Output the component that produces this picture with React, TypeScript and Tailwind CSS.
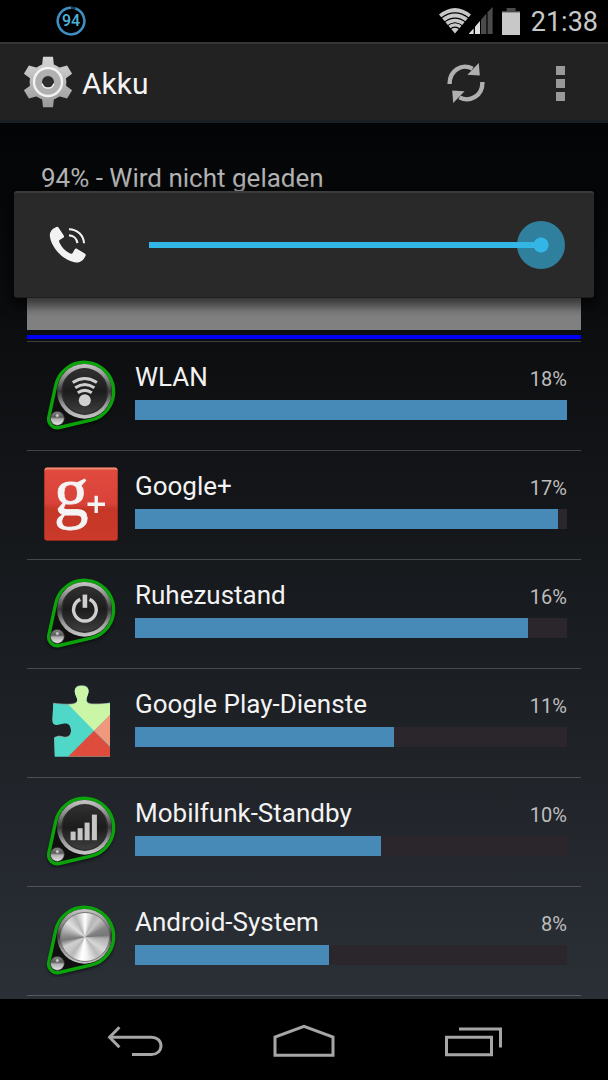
import { useId, useState } from "react";
import type { ReactNode } from "react";

const DROP_PATH =
  "M11.7 27.5A29.3 29.3 0 1 1 46.8 62.2L15.2 69.5A8.7 8.7 0 0 1 4.8 59.2Z";

/** Metal knob in a green drop outline; children are drawn on its face. */
function KnobIcon({ brushed = false, children }: { brushed?: boolean; children?: ReactNode }) {
  const id = useId();
  return (
    <svg viewBox="0 0 74 74" className="size-[74px] shrink-0" aria-hidden="true">
      <defs>
        <linearGradient id={`${id}ring`} x1="0" y1="0" x2="0" y2="1">
          <stop offset="0" stopColor="#c8c8c8" />
          <stop offset="0.25" stopColor="#8c8c8c" />
          <stop offset="0.5" stopColor="#3a3a3a" />
          <stop offset="0.75" stopColor="#9a9a9a" />
          <stop offset="1" stopColor="#c8c8c8" />
        </linearGradient>
        <linearGradient id={`${id}face`} x1="0" y1="0" x2="0" y2="1">
          <stop offset="0" stopColor="#303030" />
          <stop offset="0.5" stopColor="#1c1c1c" />
          <stop offset="1" stopColor="#3e3e3e" />
        </linearGradient>
        <linearGradient id={`${id}ball`} x1="0" y1="0" x2="0" y2="1">
          <stop offset="0" stopColor="#8a8a8a" />
          <stop offset="0.4" stopColor="#5a5a5a" />
          <stop offset="0.55" stopColor="#b0b0b0" />
          <stop offset="1" stopColor="#e6e6e6" />
        </linearGradient>
        <filter id={`${id}soft`} x="-20%" y="-20%" width="140%" height="140%">
          <feGaussianBlur stdDeviation="1.6" />
        </filter>
      </defs>
      <path d={DROP_PATH} transform="translate(0 2)" fill="#000" stroke="#000" strokeWidth="3" opacity="0.5" filter={`url(#${id}soft)`} />
      <path d={DROP_PATH} fill="#101010" stroke="#0aa30a" strokeWidth="3.4" />
      <circle cx="40.5" cy="33.3" r="27.4" fill={`url(#${id}ring)`} />
      {brushed ? (
        <foreignObject x="15.5" y="8.5" width="50" height="50">
          <div className="size-[50px] rounded-full border border-[#777] bg-[conic-gradient(#fff_0deg,#b5b5b5_25deg,#c4c4c4_40deg,#858585_65deg,#777_85deg,#b0b0b0_95deg,#d8d8d8_125deg,#b9b9b9_145deg,#f4f4f4_175deg,#fff_190deg,#b8b8b8_215deg,#c9c9c9_230deg,#cfcfcf_245deg,#777_262deg,#909090_275deg,#e0e0e0_310deg,#b5b5b5_335deg,#fff_360deg)]" />
        </foreignObject>
      ) : (
        <>
          <circle cx="40.7" cy="33.5" r="23.4" fill="#2c2c2c" />
          <circle cx="40.7" cy="33.5" r="22" fill={`url(#${id}face)`} />
        </>
      )}
      <circle cx="13.3" cy="60.4" r="7" fill={`url(#${id}ball)`} stroke="#333" strokeWidth="0.6" />
      <circle cx="13.3" cy="57.4" r="1.5" fill="#eee" opacity="0.7" />
      {children}
    </svg>
  );
}

function WifiKnob() {
  return (
    <KnobIcon>
      <g fill="none" stroke="#cfcfcf" strokeWidth="3" strokeLinecap="butt">
        <path d="M28.7 24.6Q40.8 16.6 52.9 24.6" />
        <path d="M31.2 29.8Q40.8 23.2 50.4 29.8" />
        <path d="M33.8 34.8Q40.8 30 47.8 34.8" />
      </g>
      <circle cx="40.8" cy="42.3" r="6" fill="#cfcfcf" />
    </KnobIcon>
  );
}

function PowerKnob() {
  return (
    <KnobIcon>
      <path d="M36.3 23.4A11.3 11.3 0 1 0 45.5 23.4" fill="none" stroke="#cfcfcf" strokeWidth="3.4" />
      <path d="M40.9 18.6V31.8" stroke="#cfcfcf" strokeWidth="4.6" strokeLinecap="butt" />
    </KnobIcon>
  );
}

function SignalKnob() {
  return (
    <KnobIcon>
      <g fill="#c6c6c6">
        <rect x="26.6" y="37.6" width="5" height="8.6" />
        <rect x="33.6" y="34.2" width="5" height="12" />
        <rect x="40.6" y="28.6" width="5" height="17.6" />
        <rect x="47.9" y="20.6" width="5" height="25.6" />
      </g>
    </KnobIcon>
  );
}

function GooglePlusIcon() {
  const id = useId();
  return (
    <svg viewBox="0 0 74 74" className="size-[74px] shrink-0 overflow-visible" aria-hidden="true">
      <defs>
        <linearGradient id={id} x1="0" y1="0" x2="0" y2="1">
          <stop offset="0" stopColor="#e04a3f" />
          <stop offset="0.48" stopColor="#d84238" />
          <stop offset="0.56" stopColor="#c53727" />
          <stop offset="1" stopColor="#cb3a2a" />
        </linearGradient>
      </defs>
      <rect x="0" y="0.5" width="74" height="73.5" rx="3.5" fill="#7d2018" />
      <rect x="0.5" y="0.5" width="73" height="5" rx="2.5" fill="#f08a70" />
      <rect x="0.5" y="2.6" width="73" height="70.6" rx="2.5" fill={`url(#${id})`} />
      <text x="10" y="48" fontFamily="Liberation Serif, serif" fontSize="69" fill="#f4f4f4" stroke="#f4f4f4" strokeWidth="0.8">
        g
      </text>
      <path d="M43.5 37.3H61M52.2 28.8V46" stroke="#f4f4f4" strokeWidth="3.4" />
    </svg>
  );
}

function PlayServicesIcon() {
  const id = useId();
  const outline =
    "M9.3 18.6C17 19.6 24 20 28.5 19.3C32.6 18.6 34 16.8 33 13.4C31.8 10 30.6 9 30.8 5.6C31.2 2.2 34 1 37.6 1C41.4 1 44.2 2.4 44.5 5.8C44.7 9 43.4 10.2 42.6 13.4C41.8 17 43.4 18.8 47.5 19.2C53 19.6 59 19.2 66 18.3V71.7H10.8L10.2 53C14 51.4 16.4 51.2 19.4 52.2C24 53.4 27 50.6 27 46C27 40.6 24.4 38 20 38.6C16.4 39.2 14.2 40.4 11 39.8C8.6 39 8.4 37 8.5 34Z";
  return (
    <svg viewBox="0 0 74 74" className="size-[74px] shrink-0" aria-hidden="true">
      <defs>
        <clipPath id={id}>
          <path d={outline} />
        </clipPath>
      </defs>
      <path d={outline} transform="translate(0 -0.8)" fill="#8f9a92" />
      <g clipPath={`url(#${id})`}>
        <rect width="74" height="74" fill="#4fd8c8" />
        <path d="M8 2.7L50 45.7L74 22V0H8Z" fill="#cbf6a8" />
        <path d="M50 45.7L24 71.8H76Z" fill="#dd4c3d" />
        <path d="M50 45.7L66 29.7V61Z" fill="#f0987e" />
      </g>
    </svg>
  );
}

function GearIcon() {
  const id = useId();
  return (
    <svg viewBox="-25 -26 50 52" className="h-[52px] w-[50px] shrink-0" aria-hidden="true">
      <defs>
        <linearGradient id={id} gradientUnits="userSpaceOnUse" x1="0" y1="-25" x2="0" y2="25">
          <stop offset="0" stopColor="#d6d6d6" />
          <stop offset="1" stopColor="#9b9b9b" />
        </linearGradient>
      </defs>
      <g fill={`url(#${id})`}>
        <circle r="18.4" />
        <path d="M-5 -25.2H5L6 -16H-6Z" />
        <path d="M-5 25.2H5L6 16H-6Z" />
        <path d="M19.1 -16.6L24.1 -8.2L17 -3L10 -14Z" />
        <path d="M-19.1 -16.6L-24.1 -8.2L-17 -3L-10 -14Z" />
        <path d="M19.1 16.6L24.1 8.2L17 3L10 14Z" />
        <path d="M-19.1 16.6L-24.1 8.2L-17 3L-10 14Z" />
      </g>
      <circle r="14" fill="#b0b0b0" stroke="#f2f2f2" strokeWidth="2.4" />
      <circle r="6" fill="#2c2c2c" />
      <path d="M-5.8 1.6A6 6 0 0 0 5.8 1.6" fill="none" stroke="#f5f5f5" strokeWidth="1.4" />
    </svg>
  );
}

function StatusWifi() {
  return (
    <svg viewBox="0 0 32 26" className="h-[26px] w-8" aria-hidden="true">
      <path d="M0 6.6Q16 -6.4 32 6.6L16 25.4Z" fill="#c8c8c8" />
      <g fill="none" stroke="#000" strokeWidth="1.1">
        <path d="M2 10.2Q16 -0.4 30 10.2" />
        <path d="M5 14.4Q16 5.8 27 14.4" />
        <path d="M8 18.2Q16 11.4 24 18.2" />
        <path d="M11 21.4Q16 16.8 21 21.4" />
      </g>
    </svg>
  );
}

function StatusSignal() {
  return (
    <svg viewBox="0 0 24 28" className="h-7 w-6" aria-hidden="true">
      <path d="M0 27V26.4L4.6 21.4V27Z" fill="#e0e0e0" />
      <path d="M6 27V19.8L11 14V27Z" fill="#e0e0e0" />
      <path d="M12 27V12.8L17.4 6.6V27Z" fill="#4b4b4b" />
      <path d="M18.6 27V5.2L23.6 0V27Z" fill="#4b4b4b" />
    </svg>
  );
}

function RefreshIcon() {
  return (
    <svg viewBox="0 0 38 40" className="h-10 w-[38px]" aria-hidden="true">
      <g fill="none" stroke="#b0b0b0" strokeWidth="4.4">
        <path d="M2.6 21C2.4 7 15 0.2 25.6 5.6" />
        <path d="M35.4 19C35.6 33 23 39.8 12.4 34.4" />
      </g>
      <path d="M31.8 0L32.8 12.4L20.4 11.8Z" fill="#b0b0b0" />
      <path d="M6.2 40L5.2 27.6L17.6 28.2Z" fill="#b0b0b0" />
    </svg>
  );
}

function CallVolumeIcon() {
  return (
    <svg viewBox="0 0 38 38" className="size-[38px] shrink-0" aria-hidden="true">
      <path
        d="M6.4 1.4C7.8 0.6 9 0.6 9.8 1.9L14.6 9.2C15.4 10.5 15 11.4 13.8 12.1L10.6 14C10 14.6 10 15.2 10.4 16.4C12.4 21 16.4 25.2 21.2 27.4C22.4 27.9 23.2 27.8 23.8 26.8L25.6 23.6C26.2 22.5 27.2 22.2 28.2 22.9L35.8 27.6C37 28.4 37 29.2 36.2 30.6C34.4 34.2 31.4 36.8 27.6 36.6C14.4 35.2 1.8 21.4 0.8 9.6C0.6 5.8 3 3 6.4 1.4Z"
        fill="#f2f2f2"
      />
      <g fill="none" stroke="#f2f2f2" strokeWidth="2.1">
        <path d="M20 9.4C24.6 9.6 28 12.6 28.4 17.2" />
        <path d="M20 3.2C28.4 3.4 34.6 9.2 35 17.2" />
      </g>
    </svg>
  );
}

type Consumer = { name: string; percent: number; fill: number; icon: ReactNode };

const consumers: Consumer[] = [
  { name: "WLAN", percent: 18, fill: 100, icon: <WifiKnob /> },
  { name: "Google+", percent: 17, fill: 98, icon: <GooglePlusIcon /> },
  { name: "Ruhezustand", percent: 16, fill: 91, icon: <PowerKnob /> },
  { name: "Google Play-Dienste", percent: 11, fill: 60, icon: <PlayServicesIcon /> },
  { name: "Mobilfunk-Standby", percent: 10, fill: 57, icon: <SignalKnob /> },
  { name: "Android-System", percent: 8, fill: 45, icon: <KnobIcon brushed /> },
];

function ConsumerRow({ name, percent, fill, icon }: Consumer) {
  return (
    <li className="flex gap-[17px] border-b border-white/20 pr-3.5 pl-[17px]">
      <div className="pt-4">{icon}</div>
      <div className="min-w-0 flex-1 pt-[19px] pb-[30px]">
        <div className="flex items-baseline justify-between">
          <span className="text-[26px] leading-8 text-[#f3f3f3]">{name}</span>
          <span className="text-xl text-[#bdbdbd]">{percent}%</span>
        </div>
        <div className="mt-[7px] h-5 bg-[#2a262c]">
          <div className="h-full bg-[#478ab8]" style={{ width: `${fill}%` }} />
        </div>
      </div>
    </li>
  );
}

function StatusBar() {
  return (
    <div className="flex h-[42px] items-center justify-between bg-black pr-2.5 pl-14">
      <div className="relative grid size-[30px] place-items-center">
        <svg viewBox="0 0 30 30" className="absolute inset-0" aria-hidden="true">
          <circle cx="15" cy="15" r="13.3" fill="none" stroke="#1c4258" strokeWidth="2.4" />
          <path d="M19.6 2.5A13.3 13.3 0 1 1 15 1.7" fill="none" stroke="#3d8fc2" strokeWidth="2.4" />
        </svg>
        <span className="text-base font-medium text-[#4fb4dc]">94</span>
      </div>
      <div className="flex items-center">
        <div className="-mr-0.5">
          <StatusWifi />
        </div>
        <StatusSignal />
        <svg viewBox="0 0 18 27" className="mr-[11px] ml-[9px] h-[27px] w-[18px]" aria-hidden="true">
          <rect x="4.6" y="0" width="9" height="4" fill="#4b4b4b" />
          <rect x="0" y="3" width="18" height="24" fill="#c8c8c8" />
          <rect x="0" y="3" width="18" height="1.4" fill="#4b4b4b" />
        </svg>
        <span className="pt-0.5 text-[27px] leading-8 text-[#c8c8c8]">21:38</span>
      </div>
    </div>
  );
}

function ActionBar() {
  return (
    <header className="flex h-[81px] items-center justify-between border-t-2 border-b-3 border-t-[#363636] border-b-[#1a1f23] bg-[#222] pr-[31px] pl-[23px]">
      <div className="flex items-center gap-[9px]">
        <GearIcon />
        <h1 className="pt-1 text-[30px] leading-9 text-[#f3f3f3]">Akku</h1>
      </div>
      <div className="flex items-center gap-[59px] pt-0.5">
        <button type="button" aria-label="Aktualisieren">
          <RefreshIcon />
        </button>
        <button type="button" aria-label="Weitere Optionen" className="grid justify-items-center gap-1 px-3">
          <span className="size-[9px] bg-[#999]" />
          <span className="size-[9px] bg-[#999]" />
          <span className="size-[9px] bg-[#999]" />
        </button>
      </div>
    </header>
  );
}

function VolumePanel() {
  const [volume, setVolume] = useState(100);
  return (
    <div className="absolute inset-x-3.5 top-[68px] flex h-[107px] items-center gap-[62px] rounded-[3px] border-t-2 border-b border-t-[#3c3c3c] border-b-[#1c1c1c] bg-[#292929] pr-[29px] pl-[35px] shadow-[0_4px_12px_4px_rgba(0,0,0,0.6)]">
      <CallVolumeIcon />
      <input
        type="range"
        aria-label="Anruflautstärke"
        value={volume}
        onChange={(e) => setVolume(Number(e.target.value))}
        className="h-12 min-w-0 flex-1 appearance-none bg-[linear-gradient(#33b5e5,#33b5e5)] bg-[length:calc(100%-24px)_6px] bg-left bg-no-repeat [&::-webkit-slider-thumb]:size-12 [&::-webkit-slider-thumb]:appearance-none [&::-webkit-slider-thumb]:rounded-full [&::-webkit-slider-thumb]:bg-[radial-gradient(circle,#33b5e5_7px,rgba(51,181,229,0.62)_8px)]"
      />
    </div>
  );
}

function NavigationBar() {
  return (
    <nav className="grid h-[81px] shrink-0 grid-cols-3 bg-black px-[50px]">
      <button type="button" aria-label="Zurück" className="grid place-items-center pt-1">
        <svg viewBox="0 0 56 34" className="h-[34px] w-14" fill="none" stroke="#a6a6a6" strokeWidth="3">
          <path d="M2 12.2H44.5C50 12.2 54 16 54 20.8S50 29.6 44.5 29.6H25" />
          <path d="M12.4 2.2L2.6 12.2L12.4 22.2" />
        </svg>
      </button>
      <button type="button" aria-label="Startbildschirm" className="grid place-items-center">
        <svg viewBox="0 0 62 34" className="h-[34px] w-[62px]" fill="none" stroke="#a6a6a6" strokeWidth="3">
          <path d="M2 32.2V14L31 3.4L60 14V32.2Z" />
        </svg>
      </button>
      <button type="button" aria-label="Letzte Apps" className="grid place-items-center pt-1">
        <svg viewBox="0 0 58 34" className="h-[34px] w-[58px]" fill="none" stroke="#a6a6a6" strokeWidth="3">
          <path d="M2.5 12.2H47.5V29.8H2.5Z" />
          <path d="M15 3.9H56.5V22.4" />
        </svg>
      </button>
    </nav>
  );
}

export default function App() {
  return (
    <div className="flex min-h-screen flex-col bg-black font-[Roboto,'Liberation_Sans',sans-serif]">
      <StatusBar />
      <ActionBar />
      <main className="relative flex-1 bg-[linear-gradient(#030405,#0d0e10_25%,#181b1f_55%,#2b3037)] px-[27px] pt-[39px] pb-[3px]">
        <p className="pl-3.5 text-[26px] leading-8 text-[#b4b4b4]">94% - Wird nicht geladen</p>
        <div className="mt-1.5 h-[130px] bg-[#808080]" />
        <div className="mt-[5px] h-1 bg-[#0000f0]" />
        <ul className="mt-0.5 border-t border-white/20">
          {consumers.map((c) => (
            <ConsumerRow key={c.name} {...c} />
          ))}
        </ul>
        <VolumePanel />
      </main>
      <NavigationBar />
    </div>
  );
}
